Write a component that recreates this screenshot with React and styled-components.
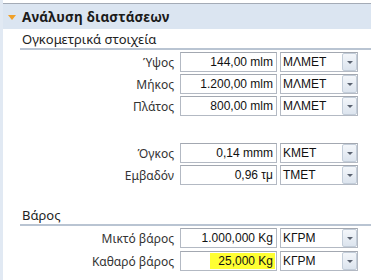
import React from 'react'
import styled, { createGlobalStyle } from 'styled-components'

const Global = createGlobalStyle`
    html, body {
        margin: 0;
        padding: 0;
        background: #ffffff;
    }
    body {
        font-family: "Noto Sans", "DejaVu Sans", sans-serif;
        font-size: 12px;
        color: #1e1e1e;
    }
`

const Panel = styled.div`
    width: 371px;
    height: 280px;
    box-sizing: border-box;
    padding-top: 3px;
    border-left: 3px solid #e1e9f3;
    background: #ffffff;
    overflow: hidden;
`

const Header = styled.div`
    height: 25px;
    border-top: 1px solid #a4abb6;
    background: #dbe5f1;
    display: flex;
    align-items: center;
    gap: 6px;
    padding-left: 5px;
    font-weight: bold;
    font-size: 13.5px;
    letter-spacing: 0.2px;
    color: #1b1b1b;
`

const Arrow = styled.span`
    width: 0;
    height: 0;
    border-left: 4px solid transparent;
    border-right: 4px solid transparent;
    border-top: 5px solid #f0a028;
    margin-top: 1px;
`

const Section = styled.div`
    padding-left: 17px;
    margin-top: ${p => p.$top || 0}px;
`

const Title = styled.div`
    height: 18px;
    line-height: 18px;
    padding-left: 2px;
    border-bottom: 2px solid #b9c4d2;
    font-size: 13px;
    color: #222;
    margin-bottom: 2px;
`

const Row = styled.div`
    display: grid;
    grid-template-columns: 157px 97px 78px;
    column-gap: 3px;
    height: 20px;
    margin-top: ${p => p.$gap ?? 2}px;
    align-items: center;
`

const Label = styled.div`
    text-align: right;
    padding-right: 3px;
    font-size: 12px;
    color: #333;
`

const Box = styled.div`
    height: 20px;
    box-sizing: border-box;
    border: 1px solid #b3b9c3;
    border-top-color: #a3a8b1;
    display: flex;
    align-items: center;
    justify-content: flex-end;
    padding-right: 3px;
    font-family: "Liberation Sans", Arial, sans-serif;
    font-size: 12px;
    color: #111;
`

const Mark = styled.span`
    background: #ffff33;
    padding: 1px 2px 1px 8px;
    margin-right: -2px;
`

const Combo = styled.div`
    height: 20px;
    box-sizing: border-box;
    border: 1px solid #b3b9c3;
    border-top-color: #a3a8b1;
    display: flex;
    align-items: center;
    font-family: "Liberation Sans", Arial, sans-serif;
    font-size: 12px;
    color: #111;
    span {
        flex: 1;
        padding-left: 2px;
    }
`

const DropBtn = styled.div`
    width: 15px;
    height: 18px;
    box-sizing: border-box;
    border: 1px solid #c3cdd9;
    border-radius: 2px;
    background: linear-gradient(#f3f6fa, #dce4ee);
    display: flex;
    align-items: center;
    justify-content: center;
    &::after {
        content: '';
        border-left: 3px solid transparent;
        border-right: 3px solid transparent;
        border-top: 3px solid #5a6270;
    }
`

function Field({ label, value, unit, gap, mark }) {
    return (
        <Row $gap={gap}>
            <Label>{label}</Label>
            <Box>{mark ? <Mark>{value}</Mark> : value}</Box>
            <Combo>
                <span>{unit}</span>
                <DropBtn />
            </Combo>
        </Row>
    )
}

export default function App() {
    return (
        <>
            <Global />
            <Panel>
                <Header>
                    <Arrow />
                    Ανάλυση διαστάσεων
                </Header>
                <Section $top={1}>
                    <Title>Ογκομετρικά στοιχεία</Title>
                    <Field label="Ύψος" value="144,00 mlm" unit="ΜΛΜΕΤ" gap={2} />
                    <Field label="Μήκος" value="1.200,00 mlm" unit="ΜΛΜΕΤ" />
                    <Field label="Πλάτος" value="800,00 mlm" unit="ΜΛΜΕΤ" />
                    <Field label="Όγκος" value="0,14 mmm" unit="ΚΜΕΤ" gap={27} />
                    <Field label="Εμβαδόν" value="0,96 τμ" unit="ΤΜΕΤ" />
                </Section>
                <Section $top={21}>
                    <Title>Βάρος</Title>
                    <Field label="Μικτό βάρος" value="1.000,000 Kg" unit="ΚΓΡΜ" gap={2} />
                    <Field label="Καθαρό βάρος" value="25,000 Kg" unit="ΚΓΡΜ" gap={3} mark />
                </Section>
            </Panel>
        </>
    )
}
